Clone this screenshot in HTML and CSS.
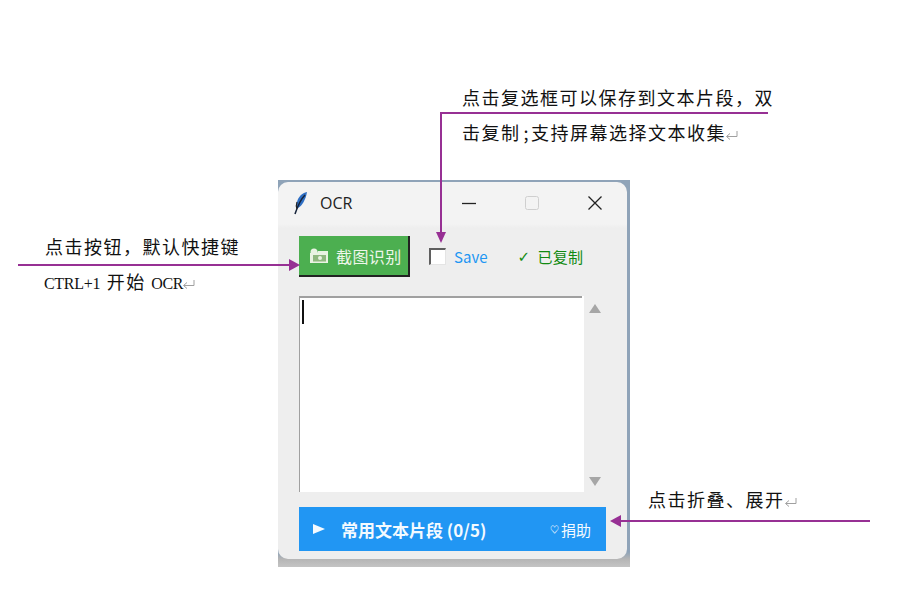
FILE: index.html
```html
<!DOCTYPE html>
<html lang="en">
<head>
    <meta charset="UTF-8">
    <title>OCR</title>
    <link rel="stylesheet" href="styles.css">
</head>
<body>
    <div class="canvas">
        <!-- screenshot of the app window -->
        <div class="shot">
            <div class="window">
                <div class="titlebar">
                    <svg class="feather" width="16" height="24" viewBox="0 0 16 24">
                        <path d="M14 1C9 2 5 6 4 11C3.500 14 4 16 5 17C9 15 13 8 14 1Z" fill="#2f6fc4"/>
                        <path d="M12 4C8 8 5 14 2 23" fill="none" stroke="#15233a" stroke-width="1.500"/>
                        <path d="M4 11C3 14 3 16 4 18" fill="none" stroke="#222" stroke-width="1.200"/>
                    </svg>
                    <span class="title">OCR</span>
                    <div class="win-controls">
                        <svg width="14" height="14" viewBox="0 0 14 14"><path d="M0 7.500H14" stroke="#222" stroke-width="1.300"/></svg>
                        <svg width="14" height="14" viewBox="0 0 14 14"><rect x="0.500" y="0.500" width="13" height="13" rx="2" fill="none" stroke="#cfcfcf"/></svg>
                        <svg width="14" height="14" viewBox="0 0 14 14"><path d="M0.500 0.500L13.500 13.500M13.500 0.500L0.500 13.500" stroke="#222" stroke-width="1.300"/></svg>
                    </div>
                </div>

                <div class="toolbar">
                    <div class="ocr-btn">
                        <svg width="20" height="16" viewBox="0 0 20 16">
                            <circle cx="5" cy="4" r="3.500" fill="#e9f3e2"/>
                            <path d="M1 5H8L9 3H19V15H1Z" fill="#e9f3e2"/>
                            <rect x="4" y="7" width="13" height="6.500" fill="#8fb87f"/>
                            <circle cx="11" cy="10" r="2" fill="#e9f3e2"/>
                        </svg>
                        <span>截图识别</span>
                    </div>
                    <span class="checkbox"></span>
                    <span class="save">Save</span>
                    <span class="copied"><span class="check">✓</span>已复制</span>
                </div>

                <div class="editor-row">
                    <div class="editor"><span class="caret"></span></div>
                    <div class="scrollbar">
                        <span class="arrow-up"></span>
                        <span class="arrow-down"></span>
                    </div>
                </div>

                <div class="snippets">
                    <span class="play"></span>
                    <span class="snippets-title">常用文本片段 (0/5)</span>
                    <span class="donate"><span class="heart">♡</span>捐助</span>
                </div>
            </div>
        </div>

        <!-- annotation lines -->
        <svg class="arrows" width="923" height="611" viewBox="0 0 923 611">
            <g fill="none" stroke="#973094" stroke-width="2">
                <path d="M18 265H290"/>
                <path d="M768 113H441V233"/>
                <path d="M870 521H620"/>
            </g>
            <g fill="#973094">
                <path d="M289 259L300 265L289 271Z"/>
                <path d="M436 232L441 243L446 232Z"/>
                <path d="M621 515L610 521L621 527Z"/>
            </g>
        </svg>

        <p class="note note-save">点击复选框可以保存到文本片段，双<br>击复制<span class="semi">;</span>支持屏幕选择文本收集<svg class="ret" width="13" height="11" viewBox="0 0 13 11"><path d="M12 1V6.500H2M5 3.500L1.500 6.500L5 9.500" fill="none" stroke="#a0a0a0"/></svg></p>
        <p class="note note-btn">点击按钮，默认快捷键<br><span class="latin latin-first">CTRL+1</span> 开始 <span class="latin">OCR</span><svg class="ret" width="13" height="11" viewBox="0 0 13 11"><path d="M12 1V6.500H2M5 3.500L1.500 6.500L5 9.500" fill="none" stroke="#a0a0a0"/></svg></p>
        <p class="note note-fold">点击折叠、展开<svg class="ret" width="13" height="11" viewBox="0 0 13 11"><path d="M12 1V6.500H2M5 3.500L1.500 6.500L5 9.500" fill="none" stroke="#a0a0a0"/></svg></p>
    </div>
</body>
</html>
```

FILE: styles.css
```css
/* General Styling */
html, body {
    margin: 0;
    padding: 0;
    background-color: white;
}

.canvas {
    position: relative;
    width: 923px;
    height: 611px;
    overflow: hidden;
    font-family: "Noto Sans CJK SC", sans-serif;
}

/* Window screenshot */
.shot {
    position: absolute;
    left: 278px;
    top: 180px;
    width: 352px;
    height: 387px;
    padding-top: 2px;
    box-sizing: border-box;
    background: linear-gradient(#8fa3b8 0, #8fa3b8 372px, #b5b5b5 379px, #c4c4c4 387px);
}

.window {
    width: 349px;
    height: 377px;
    box-sizing: border-box;
    background: linear-gradient(#f3f3f3 42px, #eeeeee 46px);
    border-radius: 10px;
    padding: 0 21px;
    display: flex;
    flex-direction: column;
}

.titlebar {
    height: 42px;
    display: flex;
    align-items: center;
    flex-shrink: 0;
    margin-left: -6px;
    margin-right: 4px;
}

.title {
    margin-left: 11px;
    font-size: 16px;
    color: #222;
    font-family: "Open Sans", sans-serif;
}

.win-controls {
    margin-left: auto;
    display: flex;
    gap: 49px;
}

.toolbar {
    margin-top: 12px;
    display: flex;
    align-items: center;
    flex-shrink: 0;
}

.ocr-btn {
    width: 111px;
    height: 41px;
    box-sizing: border-box;
    background-color: #4caf50;
    border-right: 2px solid #222;
    border-bottom: 2px solid #222;
    color: #eef6ea;
    display: flex;
    align-items: center;
    gap: 7px;
    padding-left: 10px;
    font-size: 16px;
    letter-spacing: 0.400px;
}

.checkbox {
    width: 17px;
    height: 17px;
    box-sizing: border-box;
    margin-left: 19px;
    background-color: white;
    border-top: 2px solid #5f5f5f;
    border-left: 2px solid #5f5f5f;
    border-right: 1px solid #e4e4e4;
    border-bottom: 1px solid #e4e4e4;
}

.save {
    margin-left: 8px;
    color: #2196f3;
    font-size: 15px;
}

.copied {
    margin-left: 30px;
    color: #118a11;
    font-size: 15px;
    letter-spacing: 0.300px;
    display: flex;
    align-items: center;
}

.check {
    width: 20px;
    font-family: "DejaVu Sans", sans-serif;
    font-weight: 700;
}

.editor-row {
    margin-top: 19px;
    display: flex;
    flex-shrink: 0;
}

.editor {
    width: 285px;
    height: 196px;
    box-sizing: border-box;
    background: linear-gradient(#a0a0a0, #a0a0a0) top left / 282px 2px no-repeat, white;
    border-left: 1px solid #a0a0a0;
    padding: 4px 0 0 2px;
}

.caret {
    display: block;
    width: 2px;
    height: 24px;
    background-color: #111;
}

.scrollbar {
    width: 22px;
    box-sizing: border-box;
    display: flex;
    flex-direction: column;
    justify-content: space-between;
    align-items: center;
    padding: 8px 0 6px;
}

.arrow-up {
    width: 0;
    height: 0;
    border-left: 6px solid transparent;
    border-right: 6px solid transparent;
    border-bottom: 9px solid #a6a6a6;
}

.arrow-down {
    width: 0;
    height: 0;
    border-left: 6px solid transparent;
    border-right: 6px solid transparent;
    border-top: 9px solid #a6a6a6;
}

.snippets {
    margin-top: 15px;
    width: 307px;
    height: 44px;
    box-sizing: border-box;
    flex-shrink: 0;
    background-color: #2196f3;
    color: #f4faff;
    display: flex;
    align-items: center;
    padding: 0 15px 0 14px;
}

.play {
    width: 0;
    height: 0;
    border-top: 5px solid transparent;
    border-bottom: 5px solid transparent;
    border-left: 12px solid #f4faff;
    margin-right: 16px;
}

.snippets-title {
    font-size: 17px;
    font-weight: 700;
}

.donate {
    margin-left: auto;
    font-size: 15px;
    display: flex;
    align-items: center;
}

.heart {
    font-size: 9px;
    font-weight: 700;
    margin-right: 2px;
}

/* Annotations */
.arrows {
    position: absolute;
    left: 0;
    top: 0;
}

.note {
    position: absolute;
    margin: 0;
    font-size: 18px;
    font-weight: 400;
    letter-spacing: 1.500px;
    color: #111;
    white-space: nowrap;
    line-height: 35px;
}

.note-save {
    left: 462px;
    top: 80px;
}

.note-btn {
    left: 45px;
    top: 229px;
}

.note-fold {
    left: 648px;
    top: 482px;
}

.semi {
    margin: 0 1px 0 3px;
}

.latin {
    font-family: "Liberation Serif", serif;
    font-size: 16px;
    letter-spacing: -0.300px;
}

.latin-first {
    margin-left: -1px;
    margin-right: 1px;
}

.ret {
    vertical-align: -1px;
    margin-left: -1px;
}
```
